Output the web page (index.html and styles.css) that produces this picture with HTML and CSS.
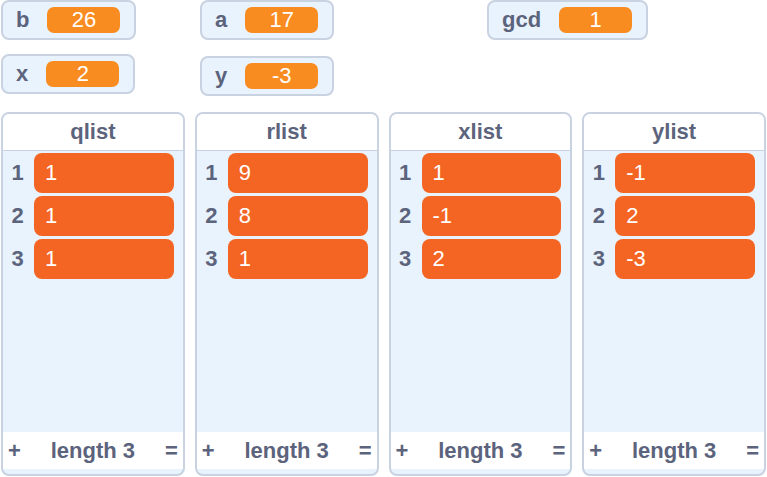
FILE: index.html
```html
<!DOCTYPE html>
<html lang="en">
<head>
<meta charset="utf-8">
<title>Extended Euclid</title>
<link rel="stylesheet" href="styles.css">
</head>
<body>
<main class="stage">
  <section class="monitors">
    <div class="stack">
      <div class="monitor"><span class="name">b</span><output class="reading">26</output></div>
      <div class="monitor"><span class="name">x</span><output class="reading">2</output></div>
    </div>
    <div class="stack stack-end">
      <div class="monitor"><span class="name">a</span><output class="reading">17</output></div>
      <div class="monitor"><span class="name">y</span><output class="reading">-3</output></div>
    </div>
    <div class="stack">
      <div class="monitor"><span class="name">gcd</span><output class="reading">1</output></div>
    </div>
  </section>
  <section class="lists">
    <article class="list">
      <h2 class="title">qlist</h2>
      <ol class="items">
        <li class="item"><span class="index">1</span><span class="value">1</span></li>
        <li class="item"><span class="index">2</span><span class="value">1</span></li>
        <li class="item"><span class="index">3</span><span class="value">1</span></li>
      </ol>
      <footer class="footer"><button class="tool" type="button">+</button><span>length 3</span><button class="tool" type="button">=</button></footer>
    </article>
    <article class="list">
      <h2 class="title">rlist</h2>
      <ol class="items">
        <li class="item"><span class="index">1</span><span class="value">9</span></li>
        <li class="item"><span class="index">2</span><span class="value">8</span></li>
        <li class="item"><span class="index">3</span><span class="value">1</span></li>
      </ol>
      <footer class="footer"><button class="tool" type="button">+</button><span>length 3</span><button class="tool" type="button">=</button></footer>
    </article>
    <article class="list">
      <h2 class="title">xlist</h2>
      <ol class="items">
        <li class="item"><span class="index">1</span><span class="value">1</span></li>
        <li class="item"><span class="index">2</span><span class="value">-1</span></li>
        <li class="item"><span class="index">3</span><span class="value">2</span></li>
      </ol>
      <footer class="footer"><button class="tool" type="button">+</button><span>length 3</span><button class="tool" type="button">=</button></footer>
    </article>
    <article class="list">
      <h2 class="title">ylist</h2>
      <ol class="items">
        <li class="item"><span class="index">1</span><span class="value">-1</span></li>
        <li class="item"><span class="index">2</span><span class="value">2</span></li>
        <li class="item"><span class="index">3</span><span class="value">-3</span></li>
      </ol>
      <footer class="footer"><button class="tool" type="button">+</button><span>length 3</span><button class="tool" type="button">=</button></footer>
    </article>
  </section>
</main>
</body>
</html>
```
FILE: styles.css
```css
* {
  box-sizing: border-box;
}

body {
  margin: 0;
  background: #fff;
  color: #5c637c;
  font: bold 22px/24px "Liberation Sans", Arial, sans-serif;
}

.stage {
  padding: 0 1px;
}

.monitors {
  display: grid;
  grid-template-columns: 199fr 287fr 279fr;
  margin-bottom: 16px;
}

.stack {
  display: flex;
  flex-direction: column;
  align-items: flex-start;
  justify-self: start;
  gap: 14px;
}

.stack-end {
  align-items: flex-end;
  gap: 16px;
}

.monitor {
  display: flex;
  align-items: center;
  gap: 18px;
  height: 40px;
  padding: 0 14px 0 13px;
  border: 2px solid #c8d2e1;
  border-radius: 8px;
  background: #e8f3fd;
}

.reading {
  width: 73px;
  height: 26px;
  border-radius: 7px;
  background: #f98c20;
  color: #fff;
  font-weight: normal;
  line-height: 26px;
  text-align: center;
}

.lists {
  display: grid;
  grid-template-columns: repeat(4, 1fr);
  gap: 10px;
}

.list {
  padding-bottom: 5px;
  overflow: hidden;
  border: 2px solid #c8d2e1;
  border-radius: 8px;
  background: #e8f3fd;
}

.title {
  margin: 0;
  padding: 6px 0;
  border-bottom: 1px solid #c8d2e1;
  background: #fff;
  font-size: 22px;
  text-align: center;
}

.items {
  display: flex;
  flex-direction: column;
  gap: 3px;
  min-height: 281px;
  margin: 0;
  padding: 2px 9px 0 0;
  list-style: none;
}

.item {
  display: flex;
  align-items: center;
}

.index {
  flex: 0 0 31px;
  padding-right: 2px;
  text-align: center;
}

.value {
  flex: 1;
  height: 40px;
  padding-left: 11px;
  border-radius: 8px;
  background: #f46523;
  color: #fff;
  font-weight: normal;
  line-height: 40px;
}

.footer {
  display: flex;
  align-items: center;
  justify-content: space-between;
  height: 37px;
  padding: 0 5px;
  background: #fff;
}

.tool {
  padding: 0;
  border: 0;
  background: none;
  color: inherit;
  font: inherit;
}
```
